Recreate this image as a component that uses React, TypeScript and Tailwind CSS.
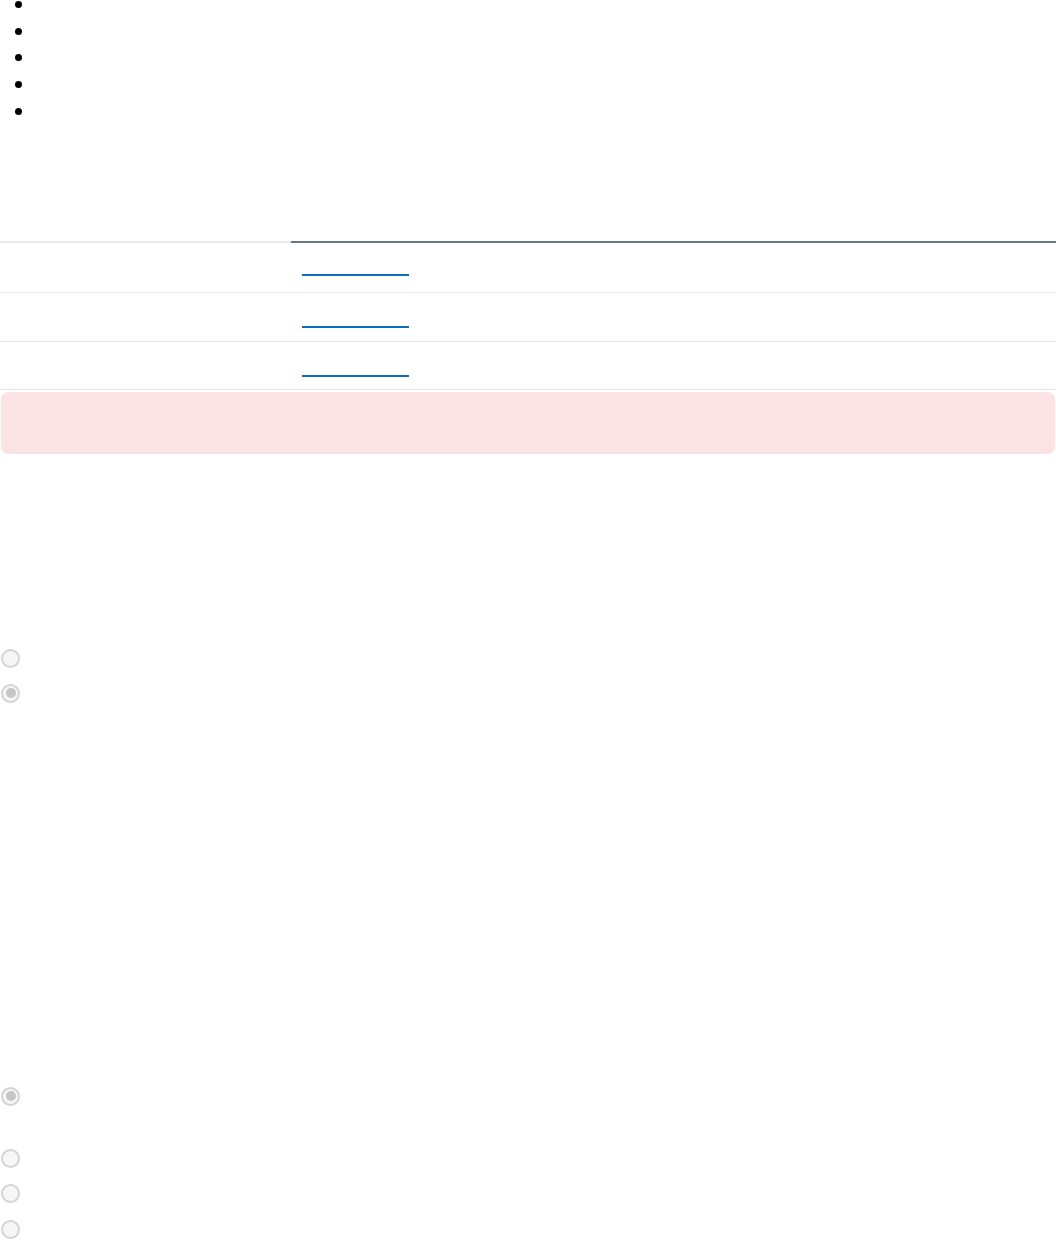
import React from 'react';

const Radio: React.FC<{ checked?: boolean; className?: string }> = ({ checked, className }) => (
    <div className={`w-[19px] h-[19px] rounded-full border-2 border-[#d4d4d4] bg-[#f6f6f6] flex items-center justify-center ${className ?? ''}`}>
        {checked && <div className="w-[10px] h-[10px] rounded-full bg-[#c6c6c6]" />}
    </div>
);

const rowHeights = ['h-[50px]', 'h-[49px]', 'h-[48px]'];

export default function App() {
    return (
        <div className="w-[1056px] h-[1240px] overflow-hidden bg-white font-['Liberation_Sans',sans-serif] text-[16px] text-black">
            <ul className="-mt-[9px]">
                {[0, 1, 2, 3, 4].map(i => (
                    <li key={i} className="h-[26.75px] flex items-center pl-[15px]">
                        <span className="w-[7px] h-[7px] rounded-full bg-black" />
                    </li>
                ))}
            </ul>

            <div className="mt-[116px]">
                <div className="flex">
                    <div className="w-[291px] h-[2px] bg-[#ebebeb]" />
                    <div className="flex-1 h-[2px] bg-[#6b7883]" />
                </div>
                {rowHeights.map((h, i) => (
                    <div key={i} className={`flex border-b border-[#e7e7e7] ${h}`}>
                        <div className="w-[291px]" />
                        <div className="flex-1 pl-[11px]">
                            <a className={`block w-[107px] ${i === 0 ? 'mt-[31px] h-[2px]' : 'mt-[33px] h-[2px]'} bg-[#0c6fb5]`} />
                        </div>
                    </div>
                ))}
                <div className="mx-px mt-[2px] h-[62px] rounded-lg bg-[#fbe3e3]" />
            </div>

            <Radio className="ml-px mt-[195px]" />
            <Radio checked className="ml-px mt-[16px]" />

            <Radio checked className="ml-px mt-[384px]" />
            <Radio className="ml-px mt-[43px]" />
            <Radio className="ml-px mt-[16px]" />
            <Radio className="ml-px mt-[17px]" />
        </div>
    );
}
